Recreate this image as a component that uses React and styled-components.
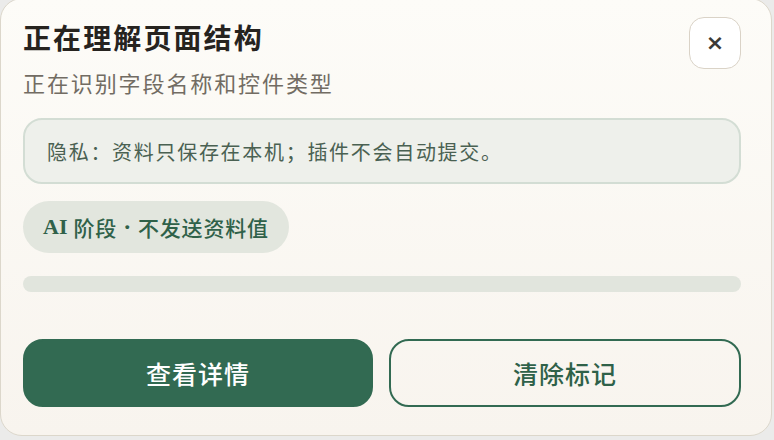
import styled, { createGlobalStyle } from "styled-components";

const GlobalStyle = createGlobalStyle`
  html, body {
    margin: 0;
    padding: 0;
    background: #ebebea;
    overflow: hidden;
  }
  * {
    box-sizing: border-box;
  }
`;

const serif = `"Liberation Serif", "Noto Sans CJK SC", serif`;
const sans = `"Noto Sans CJK SC", "Noto Sans", sans-serif`;

function App() {
  return (
    <>
      <GlobalStyle />
      <Card>
        <Header>
          <TitleBlock>
            <Title>正在理解页面结构</Title>
            <Subtitle>正在识别字段名称和控件类型</Subtitle>
          </TitleBlock>
          <CloseButton aria-label="关闭">×</CloseButton>
        </Header>
        <Notice>隐私：资料只保存在本机；插件不会自动提交。</Notice>
        <Chip>
          <strong>AI</strong> 阶段 <b>·</b> 不发送资料值
        </Chip>
        <Progress>
          <ProgressFill style={{ width: "0%" }} />
        </Progress>
        <Actions>
          <ActionButton primary>查看详情</ActionButton>
          <ActionButton>清除标记</ActionButton>
        </Actions>
      </Card>
    </>
  );
}

const Card = styled.div`
  width: 772px;
  height: 438px;
  margin-top: -2px;
  padding: 18px 30px 28px 22px;
  border: 1px solid #dcd7cb;
  border-radius: 22px;
  background: linear-gradient(180deg, #fdfcf8 0%, #f8f4ee 100%);
  display: flex;
  flex-direction: column;
`;

const Header = styled.div`
  display: flex;
  justify-content: space-between;
  align-items: flex-start;
`;

const TitleBlock = styled.div`
  display: flex;
  flex-direction: column;
  gap: 10px;
  padding-top: 3px;
`;

const Title = styled.h1`
  margin: 0;
  font-family: ${serif};
  font-size: 28px;
  font-weight: 700;
  line-height: 40px;
  letter-spacing: 2.1px;
  color: #26231f;
`;

const Subtitle = styled.p`
  margin: 0;
  font-family: ${serif};
  font-size: 22px;
  line-height: 30px;
  letter-spacing: 1.9px;
  color: #726c63;
`;

const CloseButton = styled.button`
  width: 52px;
  height: 52px;
  border: 1.5px solid #dad3c7;
  border-radius: 15px;
  background: #ffffff;
  color: #3b3a36;
  font-family: "DejaVu Sans", sans-serif;
  font-size: 22px;
  font-weight: 700;
  line-height: 1;
  display: flex;
  align-items: center;
  justify-content: center;
  padding: 0;
`;

const Notice = styled.div`
  margin-top: 18px;
  height: 66px;
  padding: 0 22px;
  border: 2px solid #d3ddd4;
  border-radius: 19px;
  background: #eef0eb;
  display: flex;
  align-items: center;
  font-family: ${serif};
  font-size: 20px;
  letter-spacing: 1.7px;
  color: #4a6152;
`;

const Chip = styled.div`
  align-self: flex-start;
  margin-top: 17px;
  height: 52px;
  padding: 0 20px;
  border-radius: 26px;
  background: #e2e6de;
  display: flex;
  align-items: center;
  font-family: ${serif};
  font-size: 21px;
  font-weight: 500;
  letter-spacing: 0.8px;
  color: #2f6149;
  white-space: pre;

  strong {
    font-size: 22px;
    font-weight: 700;
    letter-spacing: 0;
  }

  b {
    font-weight: 900;
    font-size: 24px;
  }
`;

const Progress = styled.div`
  margin-top: 23px;
  height: 16px;
  border-radius: 8px;
  background: #e1e5dd;
  overflow: hidden;
`;

const ProgressFill = styled.div`
  height: 100%;
  background: #326a52;
`;

const Actions = styled.div`
  margin-top: auto;
  display: grid;
  grid-template-columns: 350px 1fr;
  gap: 16px;
`;

const ActionButton = styled.button`
  height: 68px;
  border-radius: 20px;
  border: 2px solid #326a52;
  background: ${({ primary }) => (primary ? "#326a52" : "transparent")};
  color: ${({ primary }) => (primary ? "#ffffff" : "#2f6149")};
  font-family: ${sans};
  font-size: 25px;
  font-weight: 500;
  letter-spacing: 1px;
  cursor: pointer;
`;

export default App;
